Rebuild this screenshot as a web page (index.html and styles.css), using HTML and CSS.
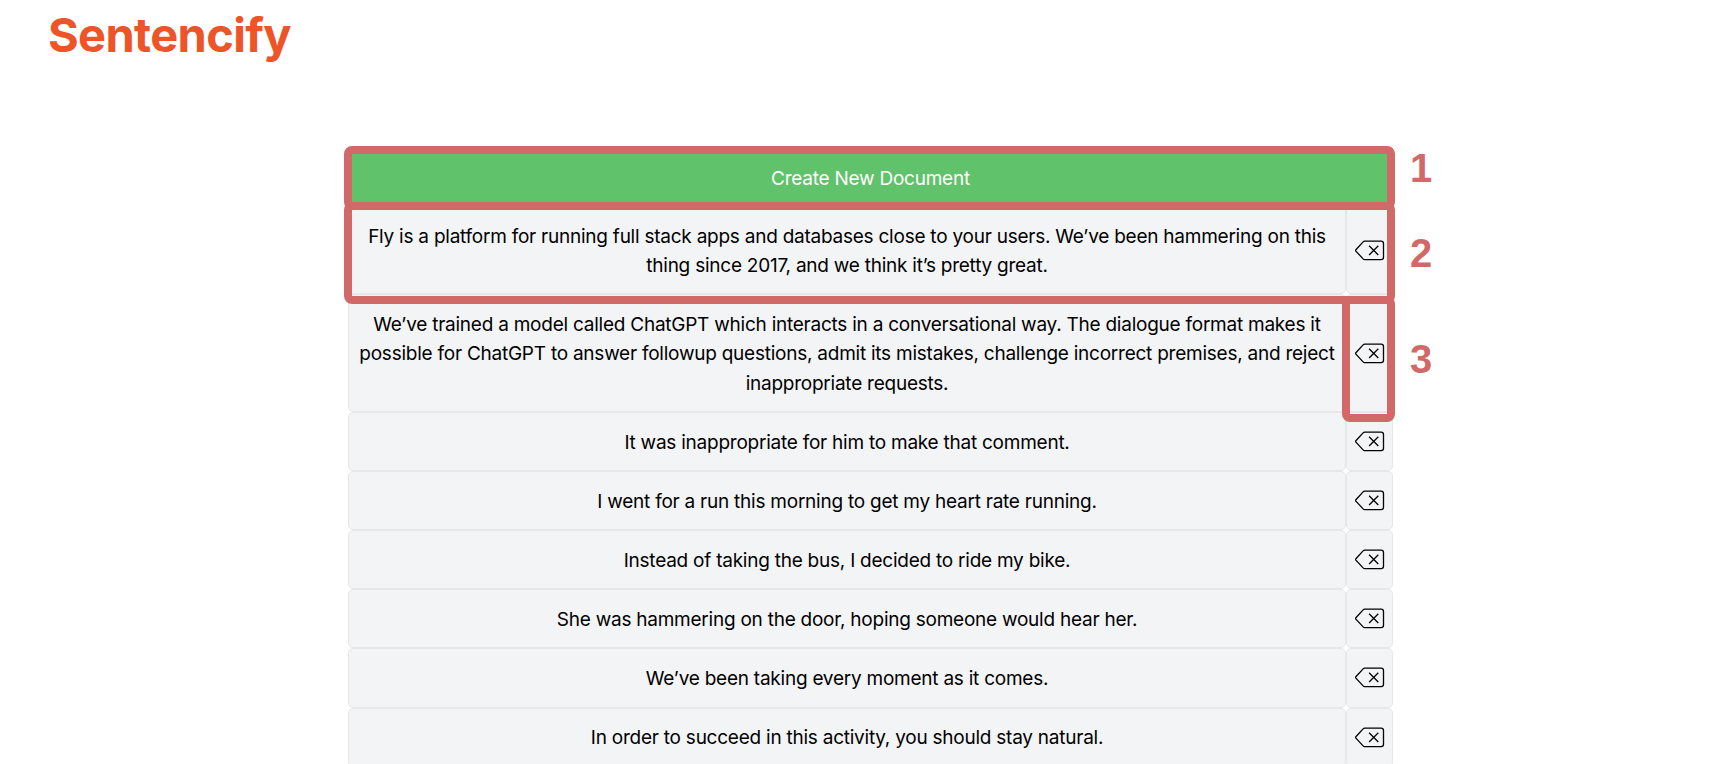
FILE: index.html
```html
<!DOCTYPE html>
<html lang="en">
<head>
<meta charset="utf-8">
<title>Sentencify</title>
<link rel="stylesheet" href="styles.css">
</head>
<body>
<svg class="defs" aria-hidden="true">
  <symbol id="backspace" viewBox="0 0 30 21">
    <path d="M9.8 1.2H26.2Q28.5 1.2 28.5 3.5V17.3Q28.5 19.6 26.2 19.6H9.8Q8.8 19.6 8.1 18.9L.9 11.1Q.4 10.4.9 9.7L8.1 1.9Q8.8 1.2 9.8 1.2Z"/>
    <path d="M14.1 5.8l9.2 9.2M23.3 5.8l-9.2 9.2"/>
  </symbol>
</svg>
<h1 class="brand">Sentencify</h1>
<main class="documents">
  <button class="create">Create New Document</button>
  <div class="row"><div class="doc">Fly is a platform for running full stack apps and databases close to your users. We’ve been hammering on this<br>thing since 2017, and we think it’s pretty great.</div><button class="remove"><svg><use href="#backspace"/></svg></button></div>
  <div class="row"><div class="doc">We’ve trained a model called ChatGPT which interacts in a conversational way. The dialogue format makes it<br>possible for ChatGPT to answer followup questions, admit its mistakes, challenge incorrect premises, and reject<br>inappropriate requests.</div><button class="remove"><svg><use href="#backspace"/></svg></button></div>
  <div class="row"><div class="doc">It was inappropriate for him to make that comment.</div><button class="remove"><svg><use href="#backspace"/></svg></button></div>
  <div class="row"><div class="doc">I went for a run this morning to get my heart rate running.</div><button class="remove"><svg><use href="#backspace"/></svg></button></div>
  <div class="row"><div class="doc">Instead of taking the bus, I decided to ride my bike.</div><button class="remove"><svg><use href="#backspace"/></svg></button></div>
  <div class="row"><div class="doc">She was hammering on the door, hoping someone would hear her.</div><button class="remove"><svg><use href="#backspace"/></svg></button></div>
  <div class="row"><div class="doc">We’ve been taking every moment as it comes.</div><button class="remove"><svg><use href="#backspace"/></svg></button></div>
  <div class="row"><div class="doc">In order to succeed in this activity, you should stay natural.</div><button class="remove"><svg><use href="#backspace"/></svg></button></div>
</main>
<div class="mark mark-create"></div>
<div class="mark mark-doc"></div>
<div class="mark mark-remove"></div>
<span class="num num-1">1</span>
<span class="num num-2">2</span>
<span class="num num-3">3</span>
</body>
</html>
```
FILE: styles.css
```css
* { box-sizing: border-box; }
body {
  position: relative;
  height: 764px;
  margin: 0;
  overflow: hidden;
  background: #fff;
  color: #000;
  font: 19px/29.15px Inter, "Liberation Sans", sans-serif;
  letter-spacing: -0.24px;
}
.defs { display: none; }
.brand {
  height: 147px;
  margin: 0;
  padding: 6px 0 0 48px;
  color: #ed5427;
  font-size: 47px;
  font-weight: 700;
  line-height: 57px;
  letter-spacing: -0.65px;
}
.documents { width: 1045px; margin-left: 348px; }
.create {
  display: block;
  width: 100%;
  height: 59.1px;
  padding: 5px 0 0;
  border: 0;
  border-radius: 4px;
  background: #60c26b;
  color: #fff;
  font: inherit;
  letter-spacing: inherit;
}
.row { display: flex; }
.doc, .remove {
  border: 1px solid #e5e7eb;
  border-radius: 5px;
  background: #f3f4f6;
}
.doc {
  width: 998px;
  padding: 14.8px 0 13.2px;
  text-align: center;
  white-space: nowrap;
}
.remove {
  display: flex;
  align-items: center;
  width: 47px;
  padding: 0 0 0 8px;
}
.remove svg {
  width: 30px;
  height: 21px;
  fill: none;
  stroke: #000;
  stroke-width: 1.3;
}
.mark {
  position: absolute;
  border: 8px solid #d16969;
  border-radius: 8px;
}
.mark-create { left: 344px; top: 146px; width: 1051px; height: 64px; }
.mark-doc { left: 344px; top: 202px; width: 1051px; height: 102px; }
.mark-remove { left: 1342px; top: 296px; width: 53px; height: 126px; }
.num {
  position: absolute;
  left: 1410px;
  color: #d16969;
  font: 700 40px/46px "Liberation Sans", sans-serif;
  letter-spacing: 0;
}
.num-1 { top: 145px; }
.num-2 { top: 230px; }
.num-3 { top: 336px; }
```
